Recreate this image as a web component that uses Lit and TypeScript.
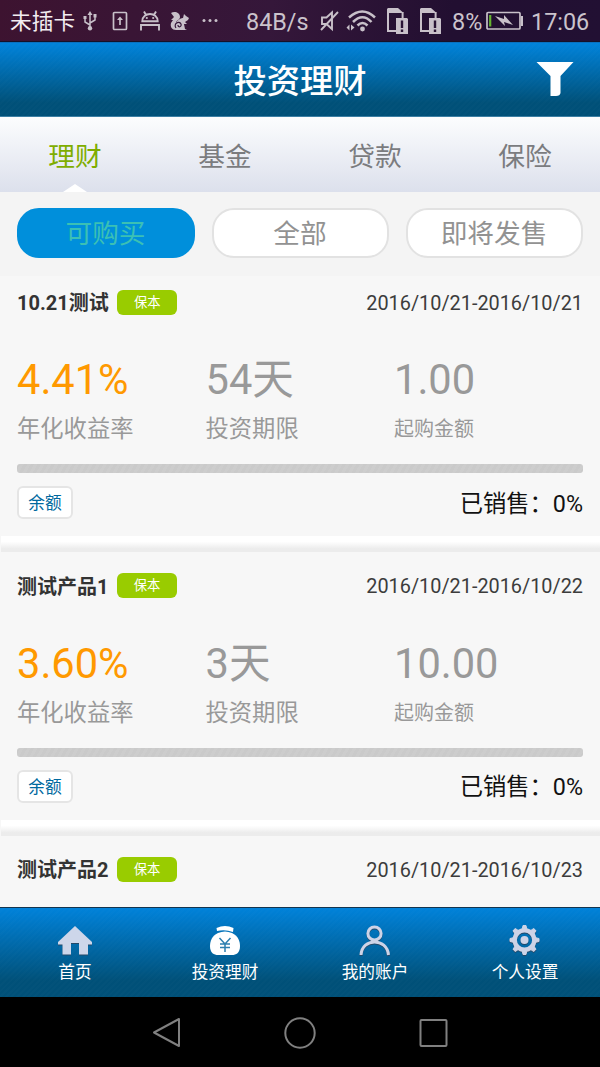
import { LitElement, html, svg, css } from "lit";
import { customElement, property } from "lit/decorators.js";

interface Product {
  name: string;
  range: string;
  rate: string;
  term: string;
  minimum: string;
  sold: number;
}

const PRODUCTS: Product[] = [
  { name: "10.21测试", range: "2016/10/21-2016/10/21", rate: "4.41%", term: "54天", minimum: "1.00", sold: 0 },
  { name: "测试产品1", range: "2016/10/21-2016/10/22", rate: "3.60%", term: "3天", minimum: "10.00", sold: 0 },
  { name: "测试产品2", range: "2016/10/21-2016/10/23", rate: "3.60%", term: "3天", minimum: "10.00", sold: 0 },
];

@customElement("status-bar")
class StatusBar extends LitElement {
  static styles = css`
    :host {
      display: block;
      flex: none;
      height: 42px;
      box-sizing: border-box;
      color: #cbc3cc;
      background: linear-gradient(97deg, #3d1330 0%, #35173a 45%, #220f31 75%, #221033 100%);
      border-bottom: 1px solid #14122a;
    }
    .row { display: flex; align-items: center; height: 42px; padding-left: 10px; font-size: 23.4px; line-height: 40px; white-space: nowrap; }
    .carrier { font-size: 21.7px; color: #f3eef2; width: 65px; padding-top: 2px; }
    .num { padding-top: 2px; }
    svg { display: block; flex: none; fill: none; stroke: #c8c0c9; stroke-width: 2; }
    .f { fill: #c8c0c9; stroke: none; }
    .usb { margin-left: 8px; }
    .sd { margin-left: 15px; }
    .droid { margin-left: 12px; }
    .squirrel { margin-left: 10px; }
    .dots { margin-left: 12px; }
    .speed { margin-left: 28px; width: 63px; }
    .mute { margin-left: 10px; }
    .wifi { margin-left: 7px; }
    .sim { margin-left: 10px; }
    .sim2 { margin-left: 11px; }
    .pct { margin-left: 10px; width: 31px; }
    .battery { margin-left: 3px; }
    .time { margin-left: 7px; }
  `;
  private sim(cls: string) {
    return html`<svg class=${cls} width="22" height="28" viewBox="0 0 22 28">
      <path d="M10 24H1V5" stroke-width="2" />
      <path d="M15.6 5V11" stroke-width="2" />
      <path class="f" d="M1 1H11L16.6 6H0V2Z" />
      <path class="f" d="M9 11H20L21 12V27H9Z" />
      <path d="M15 13.5V21M15 22.5V25" stroke="#2a1435" stroke-width="2.4" />
    </svg>`;
  }
  render() {
    return html`<div class="row">
      <span class="carrier">未插卡</span>
      <svg class="usb" width="14" height="20" viewBox="0 0 14 20">
        <path d="M7 3V17M7 14L2 11V7M7 12L12 9V5" stroke-width="1.5" />
        <path class="f" d="M7 0L9.5 4H4.5ZM0.5 5H3.5V8H0.5ZM10.5 3H13.5V6.5H10.5Z" />
        <circle class="f" cx="7" cy="17.3" r="2.2" />
      </svg>
      <svg class="sd" width="16" height="20" viewBox="0 0 16 20">
        <rect x="1.5" y="1.5" width="13" height="17" rx="1" stroke-width="1.7" />
        <path d="M8 7V14" stroke-width="1.7" />
        <path class="f" d="M8 5.5L11 9H5Z" />
      </svg>
      <svg class="droid" width="20" height="20" viewBox="0 0 20 20">
        <path d="M2.3 10.2C2.5 0.5 17.5 0.5 17.7 10.2ZM4 0.5L6 4M16 0.5L14 4M1 19.5V14H19V19.5M1 17.2" stroke-width="1.9" />
        <circle class="f" cx="6.8" cy="7" r="1.1" /><circle class="f" cx="13.2" cy="7" r="1.1" />
      </svg>
      <svg class="squirrel" width="20" height="20" viewBox="0 0 20 20">
        <path class="f" d="M1 2C4 0 10 1 10 6C10 9 6 9 6 12C8 8 12 7 13 7L14 3L16 5L19 7L18 9L15 11L17 13L14 13L15 18L17 19H6C2 19 0 16 1 12L3 9L1 9L4 6Z" />
        <path d="M6 17C3 13 9 9 11 13C12 16 8 17 8 14" stroke="#35173a" stroke-width="1.2" />
      </svg>
      <svg class="dots" width="16" height="4" viewBox="0 0 16 4">
        <circle class="f" cx="2" cy="1.5" r="1.5" /><circle class="f" cx="8" cy="1.5" r="1.5" /><circle class="f" cx="14" cy="1.5" r="1.5" />
      </svg>
      <span class="speed num">84B/s</span>
      <svg class="mute" width="20" height="22" viewBox="0 0 20 22">
        <path d="M3 7.5H7.5L13 2.5V19L7.5 14H3ZM19 2L2 20" stroke-width="1.9" />
      </svg>
      <svg class="wifi" width="31" height="22" viewBox="0 0 31 22">
        <path d="M3 7.5Q16.500 -4.500 29 7.500M7 12Q16.500 2.500 25.500 12M11.500 15.500Q16.500 10.500 21.500 15.500" stroke-width="2.5" />
        <circle class="f" cx="16.5" cy="19" r="2.4" />
        <path class="f" d="M0.500 17.500L3.500 14.500V20.500ZM5 14.500L8.500 17.500L5 20.500Z" />
      </svg>
      ${this.sim("sim")}${this.sim("sim2")}
      <span class="pct num">8%</span>
      <svg class="battery" width="38" height="20" viewBox="0 0 38 20">
        <rect x="1" y="1.5" width="33" height="16.500" rx="1" stroke-width="1.7" />
        <path class="f" d="M35 5H37V15H35ZM9 5L18 8L18 4L27 14L18 11L19 15Z" />
        <path d="M4.200 4V15.500" stroke="#65b32e" stroke-width="2.200" />
      </svg>
      <span class="time num">17:06</span>
    </div>`;
  }
}

@customElement("title-bar")
class TitleBar extends LitElement {
  static styles = css`
    :host {
      display: grid;
      grid-template-columns: 1fr auto 1fr;
      align-items: center;
      flex: none;
      height: 75px;
      box-sizing: border-box;
      border-top: 1px solid #0a70c0;
      border-bottom: 1px solid #3c7fa4;
      color: #fff;
      background: repeating-linear-gradient(135deg, transparent 0 2px, rgba(255, 255, 255, 0.012) 2px 4px),
        linear-gradient(#0083db, #005078 82%, #005078);
    }
    .title { grid-column: 2; padding-top: 4px; font-size: 33.3px; line-height: 40px; font-weight: 500; }
    svg { display: block; justify-self: end; margin: 0 26px 2px 0; }
  `;
  render() {
    return html`<span class="title">投资理财</span>
      <svg width="38" height="36" viewBox="0 0 38 36">
        <path d="M0.500 1H37.500L24.500 15V32Q24 35 20 35H14.500V15Z" fill="#fff" />
      </svg>`;
  }
}

@customElement("category-tabs")
class CategoryTabs extends LitElement {
  static styles = css`
    :host { display: grid; grid-template-columns: repeat(4, 1fr); flex: none; height: 75px; background: linear-gradient(#fcfdfe, #dce0ec); }
    .tab { display: flex; flex-direction: column; align-items: center; justify-content: space-between; height: 75px; color: #7b7c7f; font-size: 26.7px; line-height: 40px; }
    .label { padding-top: 20px; }
    .active { color: #7fad00; }
    .notch { display: block; width: 24px; height: 8px; background: #fff; clip-path: polygon(50% 0, 100% 100%, 0 100%); }
  `;
  render() {
    return html`${["理财", "基金", "贷款", "保险"].map(
      (t, i) => html`<div class="tab ${i === 0 ? "active" : ""}"><span class="label">${t}</span>${i === 0 ? html`<i class="notch"></i>` : ""}</div>`
    )}`;
  }
}

@customElement("filter-pills")
class FilterPills extends LitElement {
  static styles = css`
    :host { display: grid; grid-template-columns: 178px 177px 177px; column-gap: 17px; flex: none; height: 84px; padding: 16px 17px 0 16.5px; box-sizing: border-box; background: #f4f4f4; }
    .pill { height: 50px; box-sizing: border-box; padding-top: 3px; border: 2px solid #e2e2e2; border-radius: 22px; background: #fff; color: #929292; font-size: 26.7px; line-height: 43px; text-align: center; }
    .active { background: #008fdb; border-color: #008fdb; color: #3bc0b4; }
  `;
  render() {
    return html`<div class="pill active">可购买</div><div class="pill">全部</div><div class="pill">即将发售</div>`;
  }
}

@customElement("product-card")
class ProductCard extends LitElement {
  @property({ attribute: false }) product!: Product;
  static styles = css`
    :host { display: block; flex: none; height: 283.6px; color: #999; }
    .body { height: 260px; padding: 0 17px; overflow: hidden; background: #f7f7f7; }
    .head { display: flex; align-items: center; height: 52px; }
    .name { padding-bottom: 1px; font-size: 20px; font-weight: 700; color: #333; }
    .badge { margin-left: 8.5px; width: 60px; height: 25px; border-radius: 6px; background: #99cc00; color: #fff; font-size: 13.3px; line-height: 26px; text-align: center; }
    .range { margin-left: auto; padding-top: 2px; font-size: 19.85px; color: #3c3c3c; }
    .stats { display: grid; grid-template-columns: 188.5px 188.5px 1fr; height: 140px; padding-top: 28px; box-sizing: border-box; }
    .value { font-size: 41.6px; line-height: 48px; height: 49px; }
    .rate { color: #ff9900; }
    .label { font-size: 23.3px; line-height: 48px; white-space: nowrap; }
    .small { font-size: 20px; }
    .track { height: 9px; margin-top: -4px; border-radius: 3px; background: repeating-linear-gradient(120deg, #cacaca 0 3px, #cdcdcd 3px 6px); overflow: hidden; }
    .fill { height: 100%; background: #99cc00; }
    .foot { display: flex; align-items: center; justify-content: space-between; margin-top: 13px; height: 33px; }
    .tag { width: 56px; height: 33px; box-sizing: border-box; border: 2px solid #e5e5e5; border-radius: 6px; background: #fff; color: #00699f; font-size: 16.7px; line-height: 31px; text-align: center; }
    .sold { padding-bottom: 2px; font-size: 23.3px; color: #111; }
    .gap { height: 16px; margin-left: 1px; background: linear-gradient(#fff 0 35%, #ececec 80%, #ececec); }
    .tail { height: 7.6px; background: #f7f7f7; }
  `;
  render() {
    const p = this.product;
    return html`<div class="body">
        <div class="head"><span class="name">${p.name}</span><span class="badge">保本</span><span class="range">${p.range}</span></div>
        <div class="stats">
          <div><div class="value rate">${p.rate}</div><div class="label">年化收益率</div></div>
          <div><div class="value">${p.term}</div><div class="label">投资期限</div></div>
          <div><div class="value">${p.minimum}</div><div class="label small">起购金额</div></div>
        </div>
        <div class="track"><div class="fill" style="width:${p.sold}%"></div></div>
        <div class="foot"><span class="tag">余额</span><span class="sold">已销售：${p.sold}%</span></div>
      </div>
      <div class="gap"></div>
      <div class="tail"></div>`;
  }
}

@customElement("bottom-tabs")
class BottomTabs extends LitElement {
  static styles = css`
    :host {
      display: grid;
      grid-template-columns: repeat(4, 1fr);
      flex: none;
      height: 90px;
      box-sizing: border-box;
      border-top: 1px solid #12344f;
      background: repeating-linear-gradient(135deg, transparent 0 2px, rgba(255, 255, 255, 0.012) 2px 4px),
        linear-gradient(#0082da, #005078 82%, #005078);
    }
    .item { display: flex; flex-direction: column; align-items: center; padding-top: 16px; color: #fff; font-size: 16.7px; line-height: 26px; }
    svg { display: block; height: 34px; margin-bottom: 2px; overflow: visible; filter: drop-shadow(0 1px 0 #244968); }
    .plain { filter: none; }
  `;
  private icons = [
    html`<svg width="36" height="34" viewBox="0 0 36 34"><path d="M18 2L35 18V20.500H31V30.500H22V19H14V30.500H5.500V20.500H1V18Z" fill="#cdd6ea" /></svg>`,
    html`<svg class="plain" width="36" height="34" viewBox="0 0 36 34">
      <path d="M9.500 4Q18 0 26.500 4L26 8Q18 5 10 7Z" fill="#fff" />
      <path d="M11 9Q18 6 25 9C31 12 33 17 33 22C33 29 29 31 25 31H11C7 31 3 29 3 22C3 17 5 12 11 9Z" fill="#fff" />
      <path d="M12.500 14L18 20L23.500 14M13 20H23M13 23.500H23M18 20V28" fill="none" stroke="#2b7eaf" stroke-width="1.500" />
    </svg>`,
    html`<svg width="36" height="34" viewBox="0 0 36 34"><g fill="none" stroke="#cdd3e7" stroke-width="3"><circle cx="17.500" cy="9.500" r="6.600" /><path d="M4 31C5 13.500 30 13.500 31.500 31" /></g></svg>`,
    html`<svg width="36" height="34" viewBox="0 0 36 34"><g fill="none" stroke="#cdd3e7">
      <circle cx="17.500" cy="16" r="9.800" stroke-width="4.400" />
      ${[0, 45, 90, 135, 180, 225, 270, 315].map((a) => svg`<path d="M15 6L16 1.500H19L20 6Z" fill="#cdd3e7" stroke-width="1" transform="rotate(${a} 17.5 16)" />`)}
      <circle cx="17.500" cy="16" r="4" fill="#cdd3e7" stroke="none" /></g></svg>`,
  ];
  render() {
    return html`${["首页", "投资理财", "我的账户", "个人设置"].map((t, i) => html`<div class="item">${this.icons[i]}<span>${t}</span></div>`)}`;
  }
}

@customElement("system-keys")
class SystemKeys extends LitElement {
  static styles = css`
    :host { display: flex; flex: none; justify-content: center; gap: 101px; height: 70px; padding-top: 19px; box-sizing: border-box; background: #000; }
    svg { display: block; fill: none; stroke: #808080; stroke-width: 2; stroke-linejoin: round; }
  `;
  render() {
    return html`
      <svg width="32" height="34" viewBox="0 0 32 34"><path d="M28 3V30L3 16.500Z" /></svg>
      <svg width="32" height="34" viewBox="0 0 32 34"><circle cx="16" cy="17" r="14.700" /></svg>
      <svg width="32" height="34" viewBox="0 0 32 34"><rect x="3.500" y="4" width="26" height="26" rx="1" /></svg>`;
  }
}

@customElement("app-root")
class AppRoot extends LitElement {
  static styles = css`
    :host { display: flex; flex-direction: column; width: 600px; height: 1067px; overflow: hidden; background: #f7f7f7; font-family: Roboto, "Noto Sans CJK SC", sans-serif; }
    .list { flex: 1; min-height: 0; overflow: hidden; }
  `;
  render() {
    return html`<status-bar></status-bar><title-bar></title-bar><category-tabs></category-tabs><filter-pills></filter-pills>
      <div class="list">${PRODUCTS.map((p) => html`<product-card .product=${p}></product-card>`)}</div>
      <bottom-tabs></bottom-tabs><system-keys></system-keys>`;
  }
}
